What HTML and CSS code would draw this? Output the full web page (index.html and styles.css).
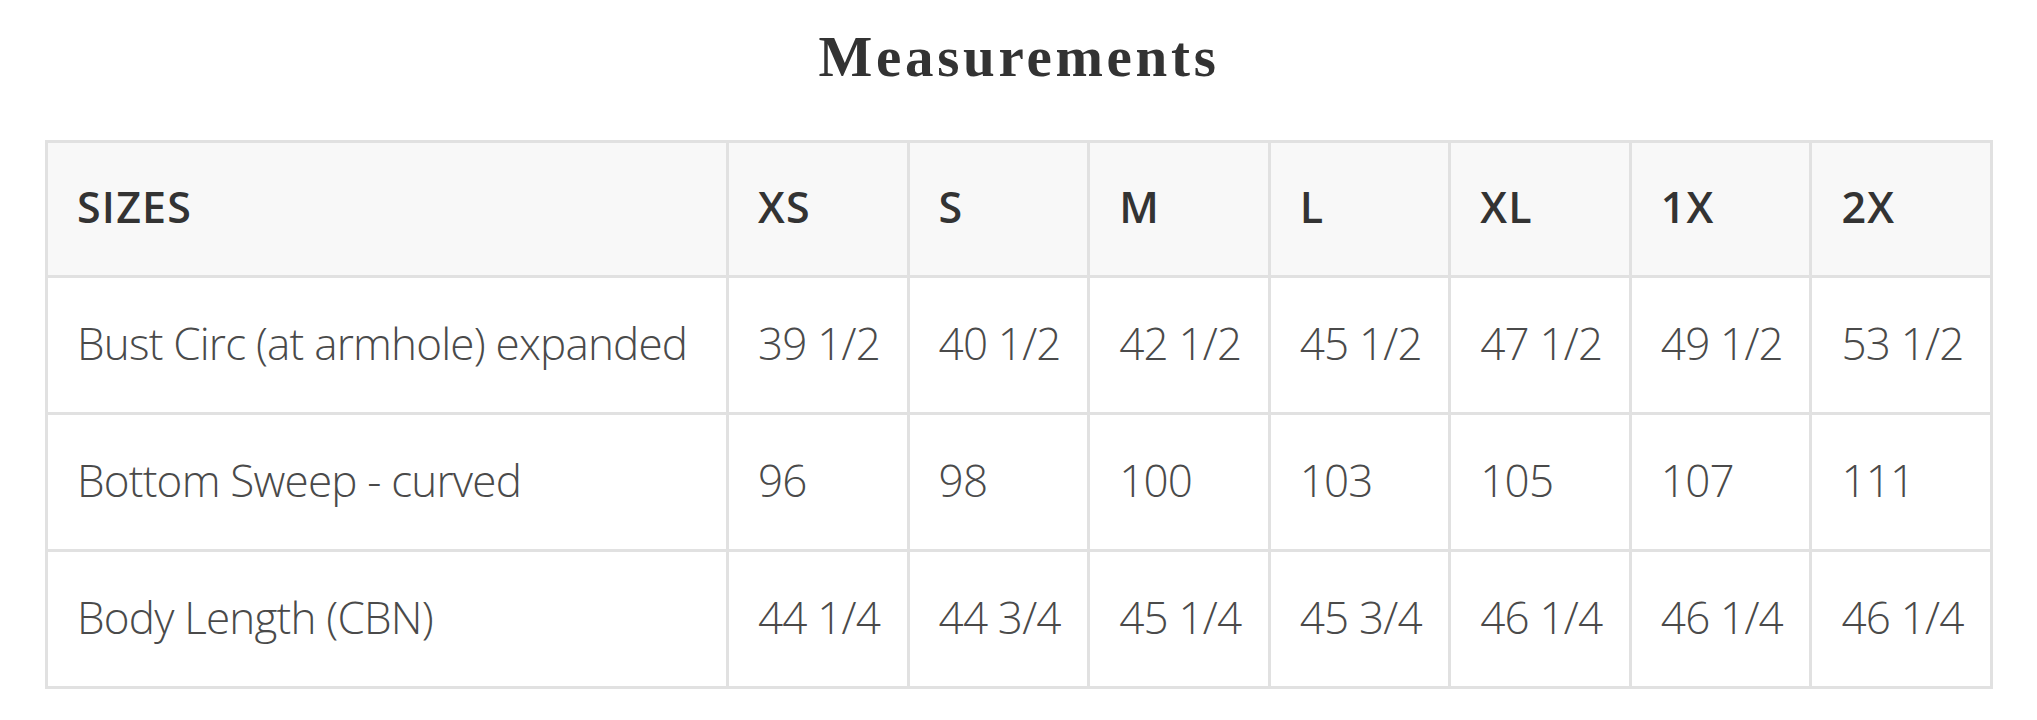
FILE: index.html
```html
<!DOCTYPE html>
<html>
<head>
<meta charset="utf-8">
<link rel="stylesheet" href="styles.css">
</head>
<body>
<div class="page">
  <h1 class="title">Measurements</h1>
  <table class="sizes">
    <colgroup>
      <col class="c-label">
      <col class="c-size"><col class="c-size"><col class="c-size"><col class="c-size"><col class="c-size"><col class="c-size"><col class="c-size">
    </colgroup>
    <thead>
      <tr><th>SIZES</th><th>XS</th><th>S</th><th>M</th><th>L</th><th>XL</th><th>1X</th><th>2X</th></tr>
    </thead>
    <tbody>
      <tr><td>Bust Circ (at armhole) expanded</td><td>39 1/2</td><td>40 1/2</td><td>42 1/2</td><td>45 1/2</td><td>47 1/2</td><td>49 1/2</td><td>53 1/2</td></tr>
      <tr><td>Bottom Sweep - curved</td><td>96</td><td>98</td><td>100</td><td>103</td><td>105</td><td>107</td><td>111</td></tr>
      <tr><td>Body Length (CBN)</td><td>44 1/4</td><td>44 3/4</td><td>45 1/4</td><td>45 3/4</td><td>46 1/4</td><td>46 1/4</td><td>46 1/4</td></tr>
    </tbody>
  </table>
</div>
</body>
</html>
```

FILE: styles.css
```css
html, body {
  margin: 0;
  padding: 0;
  background: #ffffff;
}
.page {
  padding: 28px 44px 0 45px;
}
.title {
  margin: 0 0 55px 0;
  font-family: "Liberation Serif", "Times New Roman", serif;
  font-weight: 700;
  font-size: 57px;
  line-height: 1;
  letter-spacing: 3.7px;
  color: #333333;
  text-align: center;
}
.sizes {
  width: 100%;
  border-collapse: collapse;
  table-layout: fixed;
  font-family: "Open Sans", "Noto Sans", sans-serif;
}
.c-label { width: 681px; }
.sizes th, .sizes td {
  border: 3px solid #e1e1e1;
  padding: 0 0 5px 29px;
  text-align: left;
  vertical-align: middle;
  white-space: nowrap;
}
.sizes th {
  height: 127px;
  background: #f8f8f8;
  font-weight: 600;
  font-size: 43px;
  letter-spacing: 1.2px;
  color: #333333;
}
.sizes td {
  height: 129px;
  font-weight: 300;
  font-size: 44px;
  letter-spacing: -0.8px;
  color: #4a4a4a;
}
```
